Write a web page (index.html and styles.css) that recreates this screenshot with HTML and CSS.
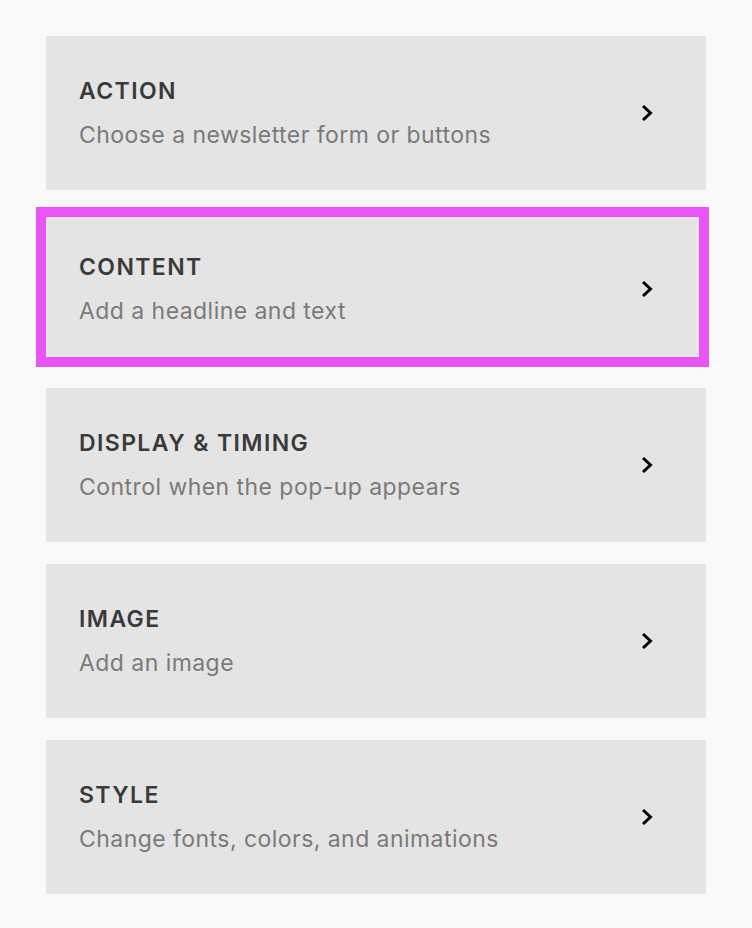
FILE: index.html
```html
<!DOCTYPE html>
<html lang="en">

<head>
    <meta charset="UTF-8">
    <meta name="viewport" content="width=device-width, initial-scale=1.0">
    <title>Pop-up Settings</title>
    <link rel="stylesheet" href="styles.css">
</head>

<body>
    <!-- Lista de secciones -->
    <nav class="panel">
        <a class="option" href="#">
            <div class="option-text">
                <div class="option-title">ACTION</div>
                <div class="option-desc">Choose a newsletter form or buttons</div>
            </div>
            <svg class="chevron" viewBox="0 0 12 18"><path d="M2 2 L9.5 9 L2 16" /></svg>
        </a>
        <a class="option selected" href="#">
            <div class="option-text">
                <div class="option-title">CONTENT</div>
                <div class="option-desc">Add a headline and text</div>
            </div>
            <svg class="chevron" viewBox="0 0 12 18"><path d="M2 2 L9.5 9 L2 16" /></svg>
            <span class="highlight"></span>
        </a>
        <a class="option" href="#">
            <div class="option-text">
                <div class="option-title">DISPLAY &amp; TIMING</div>
                <div class="option-desc">Control when the pop-up appears</div>
            </div>
            <svg class="chevron" viewBox="0 0 12 18"><path d="M2 2 L9.5 9 L2 16" /></svg>
        </a>
        <a class="option" href="#">
            <div class="option-text">
                <div class="option-title">IMAGE</div>
                <div class="option-desc">Add an image</div>
            </div>
            <svg class="chevron" viewBox="0 0 12 18"><path d="M2 2 L9.5 9 L2 16" /></svg>
        </a>
        <a class="option" href="#">
            <div class="option-text">
                <div class="option-title">STYLE</div>
                <div class="option-desc">Change fonts, colors, and animations</div>
            </div>
            <svg class="chevron" viewBox="0 0 12 18"><path d="M2 2 L9.5 9 L2 16" /></svg>
        </a>
    </nav>
</body>

</html>
```

FILE: styles.css
```css
/* Estilo general */
body {
    font-family: Inter, "Liberation Sans", Arial, sans-serif;
    margin: 0;
    padding: 0;
    background-color: #f9f9f9;
}

.panel {
    width: 660px;
    margin: 0 0 0 46px;
    padding: 36px 0;
    display: flex;
    flex-direction: column;
    gap: 22px;
}

.option {
    position: relative;
    height: 154px;
    box-sizing: border-box;
    padding: 0 53px 0 33px;
    display: flex;
    align-items: center;
    justify-content: space-between;
    background-color: #e4e4e4;
    text-decoration: none;
}

.option-title {
    font-size: 23px;
    line-height: 30px;
    font-weight: 600;
    letter-spacing: 1.4px;
    color: #3a3a3a;
}

.option-desc {
    margin-top: 14px;
    font-size: 23px;
    line-height: 30px;
    letter-spacing: 0.45px;
    color: #7a7a7a;
}

.chevron {
    width: 12px;
    height: 18px;
    fill: none;
    stroke: #000;
    stroke-width: 3;
}

/* Marco de selección */
.highlight {
    position: absolute;
    top: -5px;
    left: -10px;
    right: -3px;
    bottom: -1px;
    border: 10px solid #e854f5;
    pointer-events: none;
}
```
